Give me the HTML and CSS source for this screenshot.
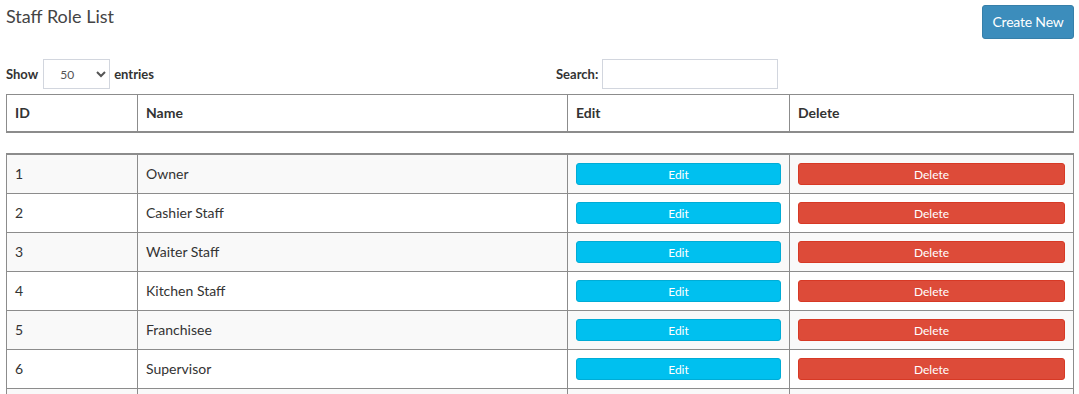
FILE: index.html
```html
<!DOCTYPE html>
<html lang="en">

<head>
    <meta charset="UTF-8">
    <meta name="viewport" content="width=device-width, initial-scale=1.0">
    <title>Staff Role List</title>
    <link rel="stylesheet" href="styles.css">
</head>

<body>
    <div class="page">
        <div class="page-head">
            <h3 class="page-title">Staff Role List</h3>
            <button class="btn btn-primary">Create New</button>
        </div>

        <div class="table-tools">
            <div class="length">
                <label>Show
                    <select class="entries-select">
                        <option>50</option>
                    </select>
                    entries</label>
            </div>
            <div class="filter">
                <label>Search:<input type="search" class="search-input"></label>
            </div>
        </div>

        <table class="grid grid-head">
            <colgroup>
                <col class="c-id"><col class="c-name"><col class="c-edit"><col class="c-del">
            </colgroup>
            <thead>
                <tr>
                    <th>ID</th>
                    <th>Name</th>
                    <th>Edit</th>
                    <th>Delete</th>
                </tr>
            </thead>
        </table>

        <table class="grid grid-body">
            <colgroup>
                <col class="c-id"><col class="c-name"><col class="c-edit"><col class="c-del">
            </colgroup>
            <tbody>
                <tr>
                    <td>1</td>
                    <td>Owner</td>
                    <td><button class="btn btn-xs btn-info">Edit</button></td>
                    <td><button class="btn btn-xs btn-danger">Delete</button></td>
                </tr>
                <tr>
                    <td>2</td>
                    <td>Cashier Staff</td>
                    <td><button class="btn btn-xs btn-info">Edit</button></td>
                    <td><button class="btn btn-xs btn-danger">Delete</button></td>
                </tr>
                <tr>
                    <td>3</td>
                    <td>Waiter Staff</td>
                    <td><button class="btn btn-xs btn-info">Edit</button></td>
                    <td><button class="btn btn-xs btn-danger">Delete</button></td>
                </tr>
                <tr>
                    <td>4</td>
                    <td>Kitchen Staff</td>
                    <td><button class="btn btn-xs btn-info">Edit</button></td>
                    <td><button class="btn btn-xs btn-danger">Delete</button></td>
                </tr>
                <tr>
                    <td>5</td>
                    <td>Franchisee</td>
                    <td><button class="btn btn-xs btn-info">Edit</button></td>
                    <td><button class="btn btn-xs btn-danger">Delete</button></td>
                </tr>
                <tr>
                    <td>6</td>
                    <td>Supervisor</td>
                    <td><button class="btn btn-xs btn-info">Edit</button></td>
                    <td><button class="btn btn-xs btn-danger">Delete</button></td>
                </tr>
                <tr class="row-more">
                    <td></td>
                    <td></td>
                    <td></td>
                    <td></td>
                </tr>
            </tbody>
        </table>
    </div>
</body>

</html>
```

FILE: styles.css
```css
html,
body {
    overflow: hidden;
}

body {
    margin: 0;
    font-family: "Source Sans Pro", Lato, "Liberation Sans", sans-serif;
    font-size: 14px;
    line-height: 1.42857;
    color: #333;
    background: #fff;
}

.page {
    padding: 0 5px 0 6px;
}

.page-head {
    display: flex;
    justify-content: space-between;
    align-items: flex-start;
    padding-top: 5px;
    height: 54px;
}

.page-title {
    margin: 1px 0 0;
    font-size: 18px;
    font-weight: 400;
    line-height: 20px;
    color: #444;
}

.btn {
    display: inline-block;
    font-family: inherit;
    font-size: 14px;
    line-height: 1.42857;
    padding: 6px 12px;
    border: 1px solid transparent;
    border-radius: 3px;
    color: #fff;
    cursor: pointer;
}

.btn-primary {
    background: #3c8dbc;
    border-color: #367fa9;
    width: 92px;
    padding: 6px 0;
    text-align: center;
    letter-spacing: -0.2px;
}

.btn-xs {
    display: block;
    width: 100%;
    font-size: 12px;
    line-height: 18px;
    padding: 2px 5px 0;
}

.btn-info {
    background: #00c0ef;
    border-color: #00acd6;
}

.btn-danger {
    background: #dd4b39;
    border-color: #d73925;
}

.table-tools {
    display: grid;
    grid-template-columns: 534px 1fr;
    height: 35px;
}

.table-tools label {
    font-size: 13px;
    font-weight: 700;
    display: flex;
    align-items: center;
    gap: 4px;
    height: 30px;
}

.filter {
    padding-left: 16px;
}

.filter label {
    gap: 4px;
}

.entries-select {
    width: 67px;
    height: 30px;
    margin-left: 1px;
    padding: 0 8px 0 12px;
    font-family: inherit;
    font-size: 12px;
    color: #555;
    border: 1px solid #d2d6de;
    background: #fff;
}

.search-input {
    width: 176px;
    height: 30px;
    box-sizing: border-box;
    border: 1px solid #d2d6de;
    font-family: inherit;
    font-size: 13px;
}

.grid {
    width: 100%;
    border-collapse: collapse;
    table-layout: fixed;
}

.c-id {
    width: 131px;
}

.c-name {
    width: 430px;
}

.c-edit {
    width: 222px;
}

.grid th,
.grid td {
    border: 1px solid #8c8c8c;
    padding: 8px;
    text-align: left;
    vertical-align: middle;
}

.grid th {
    font-weight: 700;
    border-bottom-width: 2px;
}

.grid-head {
    margin-bottom: 20px;
}

.grid-body tr:first-child td {
    border-top-width: 2px;
}

.grid-body tr:nth-child(odd) {
    background: #f9f9f9;
}

.row-more td {
    height: 22px;
}
```
